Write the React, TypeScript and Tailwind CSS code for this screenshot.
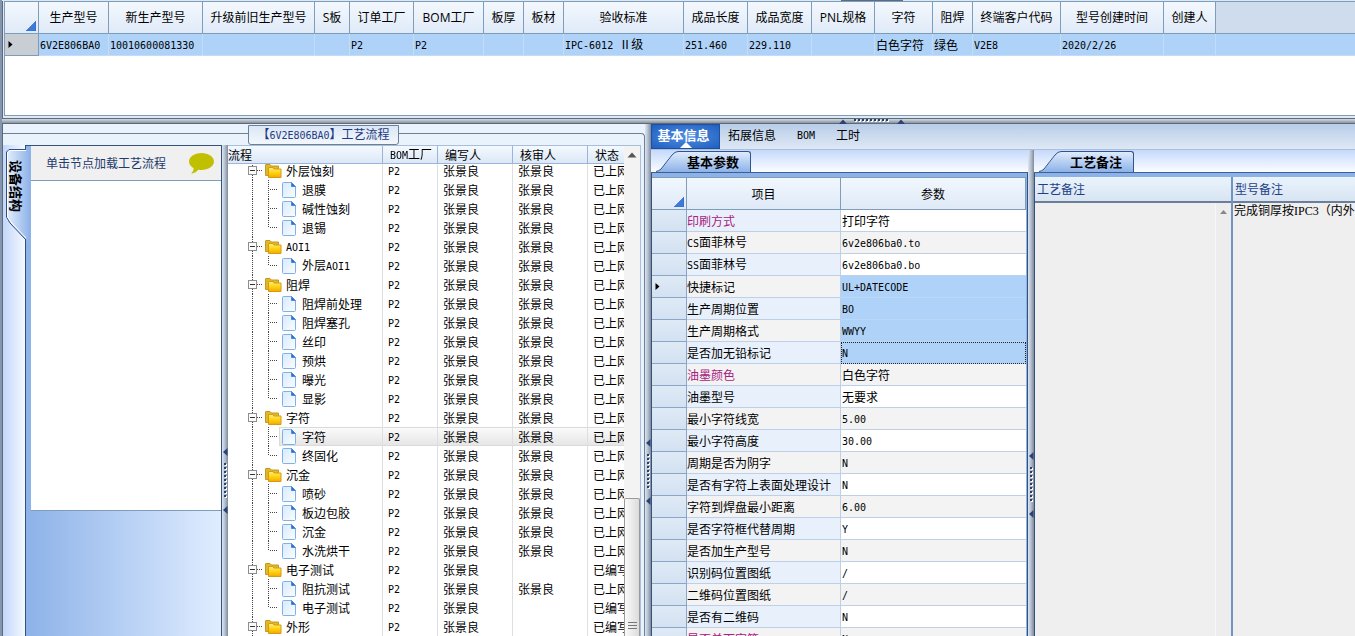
import { useLayoutEffect, useRef } from "react";
import type { ReactNode } from "react";

interface TreeNode {
  name: string;
  author: string;
  reviewer: string;
  status: string;
  children?: TreeNode[];
}

interface Param {
  label: string;
  value: string;
  required?: boolean;
  selected?: boolean;
  focused?: boolean;
}

const USER = "张景良";

function step(name: string, children?: TreeNode[]): TreeNode {
  return { name, author: USER, reviewer: USER, status: "已上网", children };
}

function draft(name: string, children?: TreeNode[]): TreeNode {
  return { name, author: USER, reviewer: "", status: "已编写", children };
}

const processTree: TreeNode[] = [
  step("外层蚀刻", [step("退膜"), step("碱性蚀刻"), step("退锡")]),
  step("AOI1", [step("外层AOI1")]),
  step("阻焊", [step("阻焊前处理"), step("阻焊塞孔"), step("丝印"), step("预烘"), step("曝光"), step("显影")]),
  step("字符", [step("字符"), step("终固化")]),
  step("沉金", [step("喷砂"), step("板边包胶"), step("沉金"), step("水洗烘干")]),
  draft("电子测试", [step("阻抗测试"), draft("电子测试")]),
  draft("外形"),
];

const params: Param[] = [
  { label: "印刷方式", value: "打印字符", required: true },
  { label: "CS面菲林号", value: "6v2e806ba0.to" },
  { label: "SS面菲林号", value: "6v2e806ba0.bo" },
  { label: "快捷标记", value: "UL+DATECODE", selected: true },
  { label: "生产周期位置", value: "BO", selected: true },
  { label: "生产周期格式", value: "WWYY", selected: true },
  { label: "是否加无铅标记", value: "N", selected: true, focused: true },
  { label: "油墨颜色", value: "白色字符", required: true },
  { label: "油墨型号", value: "无要求" },
  { label: "最小字符线宽", value: "5.00" },
  { label: "最小字符高度", value: "30.00" },
  { label: "周期是否为阴字", value: "N" },
  { label: "是否有字符上表面处理设计", value: "N" },
  { label: "字符到焊盘最小距离", value: "6.00" },
  { label: "是否字符框代替周期", value: "Y" },
  { label: "是否加生产型号", value: "N" },
  { label: "识别码位置图纸", value: "/" },
  { label: "二维码位置图纸", value: "/" },
  { label: "是否有二维码", value: "N" },
  { label: "是否单面字符", value: "N", required: true },
];

const modelColumns = [
  { title: "生产型号", value: "6V2E806BA0", width: "w-[70px]" },
  { title: "新生产型号", value: "10010600081330", width: "w-[94px]" },
  { title: "升级前旧生产型号", value: "", width: "w-[112px]" },
  { title: "S板", value: "", width: "w-[35px]" },
  { title: "订单工厂", value: "P2", width: "w-[64px]" },
  { title: "BOM工厂", value: "P2", width: "w-[70px]" },
  { title: "板厚", value: "", width: "w-[40px]" },
  { title: "板材", value: "", width: "w-[40px]" },
  { title: "验收标准", value: "IPC-6012 Ⅱ级", width: "w-[120px]" },
  { title: "成品长度", value: "251.460", width: "w-[64px]" },
  { title: "成品宽度", value: "229.110", width: "w-[64px]" },
  { title: "PNL规格", value: "", width: "w-[63px]" },
  { title: "字符", value: "白色字符", width: "w-[58px]" },
  { title: "阻焊", value: "绿色", width: "w-[40px]" },
  { title: "终端客户代码", value: "V2E8", width: "w-[88px]" },
  { title: "型号创建时间", value: "2020/2/26", width: "w-[103px]" },
  { title: "创建人", value: "", width: "w-[52px]" },
];

// Latin runs are half the width of a Chinese character, so they get the mono face
function Txt({ children }: { children: string }) {
  return (
    <>
      {children.split(/([\x20-\x7e]+)/).map((part, i) =>
        i % 2 ? (
          <span key={i} className="whitespace-pre font-['DejaVu_Sans_Mono',monospace] text-[10px]">{part}</span>
        ) : (
          part
        )
      )}
    </>
  );
}

function Corner() {
  return (
    <svg width="10" height="10" className="ml-auto" aria-hidden="true">
      <path d="M10 0V10H0Z" fill="#3c7bdc" stroke="#2c62b8" strokeWidth="0.6" />
    </svg>
  );
}

function RowArrow() {
  return (
    <svg width="5" height="7" className="ml-[3px]" aria-hidden="true">
      <path d="M0.5 0L4.5 3.5L0.5 7Z" fill="#000" />
    </svg>
  );
}

function ModelGrid() {
  return (
    <div className="ml-px h-[115px] overflow-hidden border-y border-l border-[#7f9db9] bg-white">
      <table className="w-full table-fixed border-separate border-spacing-0 text-left">
        <colgroup>
          <col className="w-[34px]" />
          {modelColumns.map((c) => <col key={c.title} className={c.width} />)}
          <col />
        </colgroup>
        <thead>
          <tr className="h-8 font-['Open_Sans','Noto_Sans_CJK_SC',sans-serif]">
            <th className="border-r border-b border-[#7f9db9] bg-linear-to-b from-[#f3f8fd] to-[#dfeaf8] pr-[2px] pb-[2px] align-bottom"><Corner /></th>
            {modelColumns.map((c) => (
              <th key={c.title} className="overflow-hidden border-r border-b border-[#7f9db9] bg-linear-to-b from-[#f3f8fd] to-[#dfeaf8] p-0 text-center font-normal whitespace-nowrap">
                {c.title}
              </th>
            ))}
            <th className="border-b border-[#7f9db9] bg-[#cfdcee] p-0" />
          </tr>
        </thead>
        <tbody>
          <tr className="h-[22px]">
            <td className="border-r border-b border-[#7f9db9] bg-[#c9cdd4] p-0"><RowArrow /></td>
            {modelColumns.map((c) => (
              <td key={c.title} className="overflow-hidden border-r border-b border-[#c3dcf8] bg-[#afd3f8] p-0 pl-px leading-4 whitespace-nowrap">
                <Txt>{c.value}</Txt>
              </td>
            ))}
            <td className="border-b border-[#c3dcf8] bg-[#afd3f8] p-0" />
          </tr>
        </tbody>
      </table>
    </div>
  );
}

const gripDots = [0, 4, 8, 12, 16, 20, 24, 28, 32];

function SplitterV({ className }: { className: string }) {
  return (
    <div className={`flex w-[6px] shrink-0 justify-center bg-linear-to-r from-[#dbe6f2] via-[#b3bfce] to-[#7f8a9c] ${className}`}>
      <svg width="5" height="66" aria-hidden="true">
        <path d="M4.5 0V8L0 4ZM4.5 58V66L0 62Z" fill="#2c4272" />
        {gripDots.map((y) => (
          <g key={y}>
            <rect x="2" y={y + 16} width="2" height="2" fill="#fff" />
            <rect x="1" y={y + 15} width="2" height="2" fill="#2c3f66" />
          </g>
        ))}
      </svg>
    </div>
  );
}

function SplitterH() {
  return (
    <div className="h-[6px] shrink-0 border-y border-[#5c6a7e] bg-linear-to-b from-[#d3dae2] to-[#8b949e] pl-[837px]">
      <svg width="66" height="5" aria-hidden="true">
        <path d="M0 5L4 0.5L8 5ZM58 5L62 0.5L66 5Z" fill="#2c4272" />
        {gripDots.map((x) => (
          <g key={x}>
            <rect x={x + 16} y="1" width="2" height="2" fill="#fff" />
            <rect x={x + 15} y="0" width="2" height="2" fill="#2c3f66" />
          </g>
        ))}
      </svg>
    </div>
  );
}

function DevicePanel() {
  return (
    <div className="flex w-[219px] shrink-0">
      <div className="relative w-[23px] shrink-0 border-r border-[#35527f] bg-linear-to-r from-[#c3d7fa] to-[#f4f8ff]">
        <svg width="24" height="94" className="absolute top-1 left-[3px]" aria-hidden="true">
          <defs>
            <linearGradient id="side-tab">
              <stop offset="0" stopColor="#e6effc" />
              <stop offset="1" stopColor="#8db2e8" />
            </linearGradient>
          </defs>
          <path d="M24 0.5H3L0.5 3V68L4 74L20 91L24 93Z" fill="url(#side-tab)" />
          <path d="M20 0.5H3L0.5 3V68L4 74L20 91" fill="none" stroke="#2f4f86" />
          <path d="M20 1.5H4L1.5 4V68L5 73L20 89" fill="none" stroke="#fff" />
        </svg>
        <button type="button" className="relative ml-[6px] pt-[15px] text-[13px] leading-[15px] font-bold text-black [text-orientation:sideways] [writing-mode:vertical-rl]">
          设备结构
        </button>
      </div>
      <div className="flex min-w-0 flex-1 flex-col border-t border-r border-[#35527f] bg-linear-to-r from-[#8db2e8] to-[#e0edff]">
        <div className="ml-[5px] flex h-[35px] shrink-0 items-center justify-between border-b border-[#7f9db9] bg-[#f0f0f0] pr-[7px] pl-[15px] text-[#1e3a6e]">
          单击节点加载工艺流程
          <svg width="25" height="21" viewBox="0 0 25 21" aria-hidden="true">
            <path d="M12.5 0C19.4 0 25 3.8 25 8.5S19.4 17 12.5 17C11.3 17 10.2 16.9 9.2 16.7C7.5 18.7 5 20.5 2 20.5C3.7 19 4.5 17.3 4.6 15.2C1.8 13.6 0 11.2 0 8.5C0 3.8 5.6 0 12.5 0Z" fill="#c0c000" />
          </svg>
        </div>
        <div className="ml-[5px] h-[330px] shrink-0 border-b border-[#7f9db9] bg-white" />
      </div>
    </div>
  );
}

function FolderIcon() {
  return (
    <svg width="17" height="14" viewBox="0 0 17 14" className="shrink-0" aria-hidden="true">
      <path d="M0.5 11.5V1Q0.5 0.5 1 0.5H5L6.5 2H13.5V11.5Z" fill="#e0b62c" stroke="#c39a20" />
      <path d="M3.5 13.5V4Q3.5 3.5 4 3.5H8L9 5H16V13.5Z" fill="url(#folder)" stroke="#d89a10" />
      <defs>
        <linearGradient id="folder" x2="0" y2="1">
          <stop offset="0" stopColor="#fff07a" />
          <stop offset="0.5" stopColor="#ffd416" />
          <stop offset="1" stopColor="#f5a800" />
        </linearGradient>
      </defs>
    </svg>
  );
}

function FileIcon() {
  return (
    <svg width="15" height="16" viewBox="0 0 15 16" className="shrink-0" aria-hidden="true">
      <defs>
        <linearGradient id="sheet" x2="1" y2="1">
          <stop offset="0" stopColor="#d8e9fc" />
          <stop offset="1" stopColor="#fafdff" />
        </linearGradient>
      </defs>
      <path d="M0.5 1.5Q0.5 0.5 1.5 0.5H9.5L13.5 4.5V14.5Q13.5 15.5 12.5 15.5H1.5Q0.5 15.5 0.5 14.5Z" fill="url(#sheet)" stroke="#7fb0e8" />
      <path d="M9.5 0.5L13.5 4.5H9.5Z" fill="#2f6fd0" stroke="#4a88dc" />
    </svg>
  );
}

function GroupCell({ name }: { name: string }) {
  return (
    <div className="flex h-[19px] items-center">
      <button type="button" aria-label={name} className="shrink-0">
        <svg width="37" height="19" className="block" aria-hidden="true">
          <path d="M24.5 0V19M29 9.5H34" stroke="#444" strokeDasharray="1 1" />
          <rect x="20.5" y="5.5" width="8" height="8" fill="#fbfbfb" stroke="#8e8e8e" />
          <path d="M22 9.5H27" stroke="#333" />
        </svg>
      </button>
      <FolderIcon />
      <span className="pl-1"><Txt>{name}</Txt></span>
    </div>
  );
}

function StepCell({ name, last, active }: { name: string; last: boolean; active: boolean }) {
  return (
    <div className="flex h-[19px] items-center">
      <svg width="51" height="19" className="shrink-0" aria-hidden="true">
        <path d={last ? "M24.5 0V19M40.5 0V10M42 9.5H50" : "M24.5 0V19M40.5 0V19M42 9.5H50"} fill="none" stroke="#444" strokeDasharray="1 1" />
      </svg>
      <div className={`flex h-full flex-1 items-center border-l pl-[2px] ${active ? "border-y border-[#dadada] bg-linear-to-b from-[#fafafa] to-[#e6e6e6]" : "border-transparent"}`}>
        <FileIcon />
        <span className="pl-[5px]"><Txt>{name}</Txt></span>
      </div>
    </div>
  );
}

function TreeRow({ node, active, children }: { node: TreeNode; active?: boolean; children: ReactNode }) {
  const cell = `overflow-hidden p-0 pl-[5px] leading-[15px] ${active ? "border-y border-y-[#dadada] bg-linear-to-b from-[#fafafa] to-[#e6e6e6]" : ""}`;
  return (
    <tr className="h-[19px]">
      <td className="border-r border-[#dfdfdf] p-0 leading-[15px]">{children}</td>
      <td className={`border-r border-r-[#dfdfdf] ${cell}`}><Txt>P2</Txt></td>
      <td className={`border-r border-r-[#dfdfdf] ${cell}`}>{node.author}</td>
      <td className={`border-r border-r-[#dfdfdf] ${cell}`}>{node.reviewer}</td>
      <td className={cell}>{node.status}</td>
    </tr>
  );
}

function ProcessTree() {
  const scroller = useRef<HTMLDivElement>(null);
  useLayoutEffect(() => {
    if (scroller.current) scroller.current.scrollTop = 4;
  }, []);

  const head = "sticky top-0 z-10 h-[18px] border-b border-[#9ab5d8] bg-linear-to-b from-[#f4f9fe] to-[#dce8f7] p-0 font-normal leading-[15px]";
  return (
    <div className="flex min-w-0 flex-1 border-t border-r border-[#a9bedb] bg-white">
      <div ref={scroller} className="min-w-0 flex-1 overflow-hidden">
        <table className="w-full table-fixed border-separate border-spacing-0 text-left whitespace-nowrap">
          <colgroup>
            <col className="w-[155px]" />
            <col className="w-[55px]" />
            <col className="w-[75px]" />
            <col className="w-[75px]" />
            <col />
          </colgroup>
          <thead>
            <tr>
              <th className={`${head} border-r`}>流程</th>
              <th className={`${head} border-r pl-[7px]`}><Txt>BOM工厂</Txt></th>
              <th className={`${head} border-r pl-[7px]`}>编写人</th>
              <th className={`${head} border-r pl-[7px]`}>核审人</th>
              <th className={`${head} pl-[7px]`}>状态</th>
            </tr>
          </thead>
          <tbody>
            {processTree.map((group) => [
              <TreeRow key={group.name} node={group}><GroupCell name={group.name} /></TreeRow>,
              ...(group.children ?? []).map((child, i, all) => {
                const active = group.name === "字符" && child.name === "字符";
                return (
                  <TreeRow key={`${group.name}/${child.name}`} node={child} active={active}>
                    <StepCell name={child.name} last={i === all.length - 1} active={active} />
                  </TreeRow>
                );
              }),
            ])}
          </tbody>
        </table>
      </div>
      <div className="flex w-4 shrink-0 flex-col bg-[#f3f3f3]">
        <svg width="16" height="18" className="shrink-0" aria-hidden="true">
          <path d="M3.5 11.5L8 6.5L12.5 11.5Z" fill="#555" />
        </svg>
        <div className="grow-[340] basis-0" />
        <div className="flex grow-[133] basis-0 flex-col items-center justify-end gap-[2px] rounded-t-[2px] border border-b-0 border-[#9a9a9a] bg-linear-to-r from-[#fafafa] to-[#dcdcdc] pb-[7px]">
          <span className="h-px w-[9px] bg-[#777]" />
          <span className="h-px w-[9px] bg-[#777]" />
          <span className="h-px w-[9px] bg-[#777]" />
        </div>
      </div>
    </div>
  );
}

function PageTab({ title }: { title: string }) {
  return (
    <div className="flex h-[23px] shrink-0 items-end border-b border-[#3c5f94] bg-linear-to-b from-[#c6d9fb] to-[#fbfdff] pl-[5px]">
      <button type="button" className="flex h-[21px] text-[13px] font-bold text-black">
        <svg width="22" height="21" className="shrink-0" aria-hidden="true">
          <defs>
            <linearGradient id="page-tab" x2="0" y2="1">
              <stop offset="0" stopColor="#dfebfc" />
              <stop offset="1" stopColor="#8db2e8" />
            </linearGradient>
          </defs>
          <path d="M0 21Q3 20 5 18L17 4Q19 0.5 22 0.5V21Z" fill="url(#page-tab)" />
          <path d="M0 20.5Q3 20 5 18L16 4Q19 0.5 22 0.5" fill="none" stroke="#2f5591" />
        </svg>
        <span className="h-full rounded-tr-[3px] border-t border-r border-[#2f5591] bg-linear-to-b from-[#dfebfc] to-[#8db2e8] pr-[11px] pl-[9px] leading-[19px]">
          {title}
        </span>
      </button>
    </div>
  );
}

function ParamPanel() {
  const head = "h-8 border-r border-b border-[#7f9db9] bg-linear-to-b from-[#f1f7fd] to-[#dfeaf8] p-0 font-normal";
  return (
    <div className="flex w-[377px] shrink-0 flex-col overflow-hidden">
      <PageTab title="基本参数" />
      <div className="min-h-0 flex-1 overflow-hidden border-r border-l border-[#35527f] bg-[#8db2e8] pt-1 pr-px">
        <table className="w-full table-fixed border-separate border-spacing-0 border-t border-[#7f9db9] text-left whitespace-nowrap">
          <colgroup>
            <col className="w-[35px]" />
            <col className="w-[154px]" />
            <col />
          </colgroup>
          <thead>
            <tr>
              <th className={`${head} pr-[2px] pb-[2px] align-bottom`}><Corner /></th>
              <th className={`${head} text-center`}>项目</th>
              <th className={`${head} text-center`}>参数</th>
            </tr>
          </thead>
          <tbody>
            {params.map((p, i) => (
              <tr key={p.label} className="h-[22px]">
                <td className="border-r border-b border-[#8ba6c8] bg-linear-to-b from-[#dfeaf6] to-[#d3e1f1] p-0">{i === 3 && <RowArrow />}</td>
                <td className={`border-r border-b border-[#bdd0e8] p-0 leading-4 ${i % 2 ? "bg-[#f3f3f3]" : "bg-[#e8f1fb]"} ${p.required ? "text-[#a8207e]" : "text-black"}`}>
                  <Txt>{p.label}</Txt>
                </td>
                <td
                  className={`border-b p-0 pl-px leading-4 ${p.selected ? "border-[#bcd8f6] bg-[#afd3f8]" : i % 2 ? "border-[#bdd0e8] bg-[#f3f3f3]" : "border-[#bdd0e8] bg-white"} ${p.focused ? "outline-1 -outline-offset-1 outline-[#222] outline-dotted" : ""}`}
                >
                  <Txt>{p.value}</Txt>
                </td>
              </tr>
            ))}
          </tbody>
        </table>
      </div>
    </div>
  );
}

function NotesPanel() {
  const label = "flex h-[26px] shrink-0 items-center border-b-2 border-[#6b7f99] bg-linear-to-b from-[#e9f4fd] to-[#d8e4f1] text-[#1e3f86]";
  return (
    <div className="flex min-w-0 flex-1 flex-col">
      <PageTab title="工艺备注" />
      <div className="flex min-h-0 flex-1 border-l border-[#35527f] bg-[#8db2e8] pt-1">
        <div className="flex w-[198px] shrink-0 flex-col border-r-2 border-[#6f93c4]">
          <label htmlFor="process-note" className={`${label} pl-[2px]`}>工艺备注</label>
          <div className="flex min-h-0 flex-1 bg-[#f0f0f0]">
            <textarea id="process-note" readOnly className="min-w-0 flex-1 resize-none bg-[#efefef] outline-none" />
            <div className="w-4 shrink-0 border-l border-[#f8f8f8] bg-[#ededed]">
              <svg width="15" height="18" aria-hidden="true">
                <path d="M4 11L7.5 7L11 11Z" fill="#888" />
              </svg>
            </div>
          </div>
        </div>
        <div className="flex min-w-0 flex-1 flex-col">
          <label htmlFor="model-note" className={`${label} pl-[2px]`}>型号备注</label>
          <textarea
            id="model-note"
            readOnly
            wrap="off"
            defaultValue="完成铜厚按IPC3（内外"
            className="min-h-0 flex-1 resize-none overflow-hidden bg-[#efefef] pl-px font-['Liberation_Serif','Noto_Sans_CJK_SC',serif] leading-4 outline-none"
          />
        </div>
      </div>
    </div>
  );
}

function TopTabs() {
  return (
    <div role="tablist" className="flex h-[26px] shrink-0 border-b border-[#a9bfdc] bg-linear-to-b from-[#b9cde8] to-[#dee8f5]">
      <button type="button" role="tab" aria-selected="true" className="relative w-[69px] border border-[#1f4f9e] bg-radial from-[#4f8de0] to-[#1f5fc0] pr-1 pb-1 text-[13px] leading-5 font-bold text-white">
        基本信息
        <svg width="12" height="6" className="absolute bottom-0 left-7" aria-hidden="true">
          <path d="M0 6L6 0L12 6Z" fill="#fff" />
        </svg>
      </button>
      <button type="button" role="tab" className="px-2 pb-1">拓展信息</button>
      <button type="button" role="tab" className="w-11 pb-1"><Txt>BOM</Txt></button>
      <button type="button" role="tab" className="px-2 pb-1">工时</button>
    </div>
  );
}

export default function App() {
  return (
    <div className="flex h-screen flex-col overflow-hidden border-l-2 border-[#8595ae] bg-[#eaf3fb] font-['Noto_Sans_CJK_SC',sans-serif] text-xs text-black">
      <div className="flex h-px shrink-0 bg-[#dbe8f6] pl-[839px]">
        <div className="w-[62px] bg-[#5a6b85]" />
      </div>
      <div className="shrink-0 border-l border-[#5c6a7e] bg-[#dfeaf6] pb-[2px]">
        <ModelGrid />
      </div>
      <SplitterH />
      <div className="flex min-h-0 flex-1 border-l border-[#5c6a7e]">
        <section className="flex w-[642px] shrink-0 flex-col pt-[9px]">
          <div className="relative flex min-h-0 flex-1 rounded-tr-[4px] border-t border-r border-[#6d8098] pt-[11px] pr-[3px]">
            <h2 className="absolute -top-[9px] left-[245px] z-20 h-5 w-[151px] rounded-b-[3px] border border-[#6d8098] bg-linear-to-b from-[#dbe7f5] to-[#f2f7fc] text-center leading-[15px] whitespace-nowrap text-[#1f3a80]">
              <Txt>【6V2E806BA0】工艺流程</Txt>
            </h2>
            <DevicePanel />
            <SplitterV className="items-start pt-[303px]" />
            <ProcessTree />
          </div>
        </section>
        <SplitterV className="items-start pt-[315px]" />
        <main className="flex min-w-0 flex-1 flex-col">
          <TopTabs />
          <div className="flex min-h-0 flex-1">
            <ParamPanel />
            <SplitterV className="items-start pt-[302px]" />
            <NotesPanel />
          </div>
        </main>
      </div>
    </div>
  );
}
